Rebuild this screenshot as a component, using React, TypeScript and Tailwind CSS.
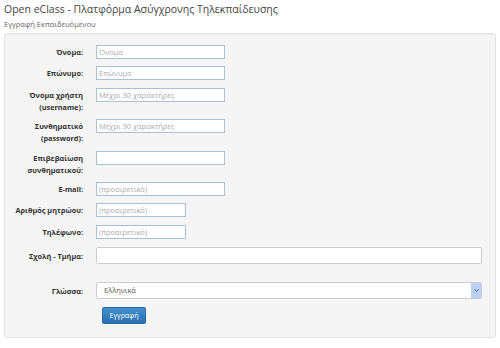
import { ChevronDown } from 'lucide-react';

type Field = {
  label: string[];
  placeholder?: string;
  width: string;
  top: string;
};

const fields: Field[] = [
  { label: ['Όνομα:'], placeholder: 'Όνομα', width: 'w-[129px]', top: 'mt-0' },
  { label: ['Επώνυμο:'], placeholder: 'Επώνυμο', width: 'w-[129px]', top: 'mt-[7px]' },
  { label: ['Όνομα χρήστη', '(username):'], placeholder: 'Μέχρι 30 χαρακτήρες', width: 'w-[129px]', top: 'mt-[8px]' },
  { label: ['Συνθηματικό', '(password):'], placeholder: 'Μέχρι 30 χαρακτήρες', width: 'w-[129px]', top: 'mt-[6px]' },
  { label: ['Επιβεβαίωση', 'συνθηματικού:'], width: 'w-[129px]', top: 'mt-[7px]' },
  { label: ['E-mail:'], placeholder: '(προαιρετικό)', width: 'w-[129px]', top: 'mt-[6px]' },
  { label: ['Αριθμός μητρώου:'], placeholder: '(προαιρετικό)', width: 'w-[90px]', top: 'mt-[7px]' },
  { label: ['Τηλέφωνο:'], placeholder: '(προαιρετικό)', width: 'w-[90px]', top: 'mt-[8px]' },
];

const Label = ({ lines }: { lines: string[] }) => (
  <div className="w-[78px] shrink-0 pt-[1px] text-right text-[7.3px] font-bold leading-[12px] text-[#333]">
    {lines.map((l) => (
      <div key={l}>{l}</div>
    ))}
  </div>
);

export default function App() {
  return (
    <div className="h-[348px] w-[500px] bg-white px-[4px] pt-[1px] font-['Open_Sans',sans-serif] text-[#333]">
      <h1 className="text-[10.5px] leading-[16px] text-[#444]">Open eClass - Πλατφόρμα Ασύγχρονης Τηλεκπαίδευσης</h1>
      <p className="mt-[2px] text-[7.5px] leading-[11px] text-[#666]">Εγγραφή Εκπαιδευόμενου</p>

      <div className="mt-[3px] h-[305px] w-[492px] rounded-[3px] border border-[#e3e3e3] bg-[#f5f5f5] pt-[11px] shadow-[inset_0_1px_1px_rgba(0,0,0,0.04)]">
        <div className="flex flex-col">
          {fields.map((f) => (
            <div key={f.label.join(' ')} className={`flex items-start gap-[13px] ${f.top}`}>
              <Label lines={f.label} />
              <input
                readOnly
                placeholder={f.placeholder}
                className={`${f.width} h-[14px] border border-[#a8c0d8] bg-white px-[2px] text-[7.5px] outline-none placeholder:text-[#aaa]`}
              />
            </div>
          ))}

          <div className="mt-[8px] flex items-center gap-[13px]">
            <Label lines={['Σχολή - Τμήμα:']} />
            <div className="h-[17px] w-[386px] rounded-[2px] border border-[#ccc] bg-white" />
          </div>

          <div className="mt-[18px] flex items-center gap-[13px]">
            <Label lines={['Γλώσσα:']} />
            <div className="flex h-[17px] w-[386px] items-center justify-between rounded-[2px] border border-[#ccc] bg-white pl-[7px]">
              <span className="text-[7.5px] text-[#555]">Ελληνικά</span>
              <span className="flex h-[15px] w-[10px] items-center justify-center bg-[#bcd0f5]">
                <ChevronDown size={7} strokeWidth={3} className="text-[#3a4a66]" />
              </span>
            </div>
          </div>

          <div className="mt-[8px] flex pl-[97px]">
            <button className="block h-[17px] w-[44px] rounded-[2px] border border-[#2a69a6] bg-gradient-to-b from-[#4190d0] to-[#2c6fb1] text-[7px] leading-[15px] text-white">
              Εγγραφή
            </button>
          </div>
        </div>
      </div>
    </div>
  );
}
